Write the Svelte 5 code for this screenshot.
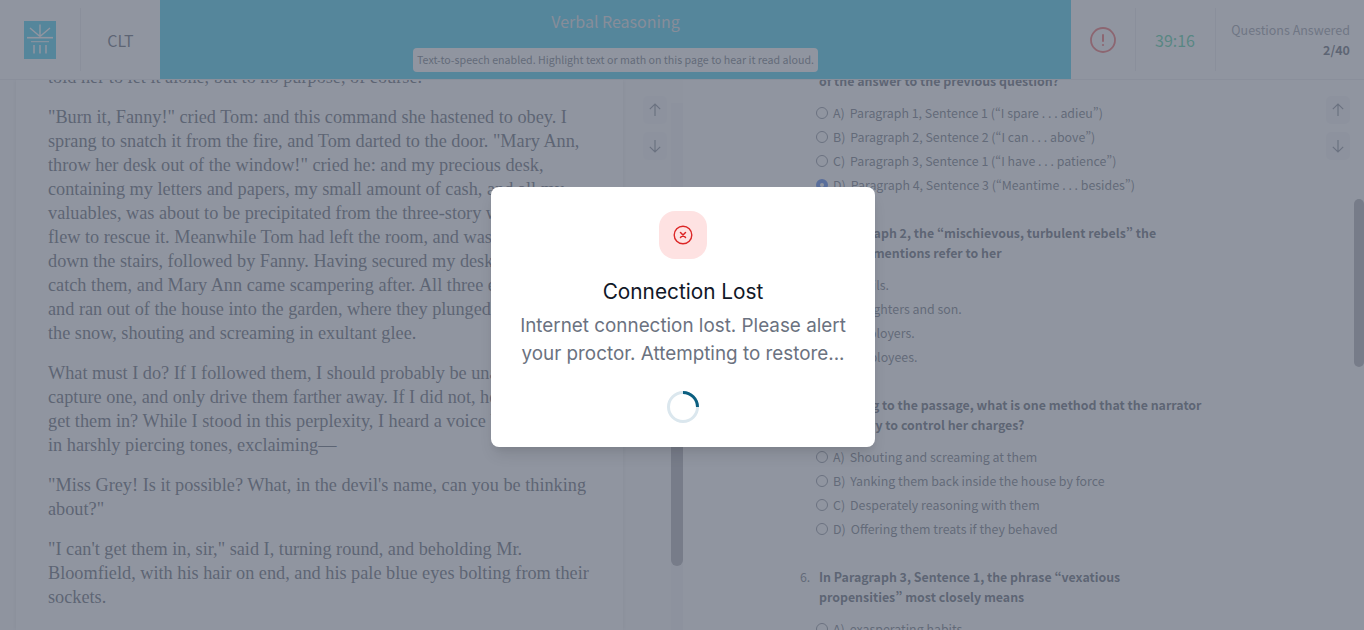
<script>
  const passage = [
    ["told her to let it alone, but to no purpose, of course."],
    [
      "\"Burn it, Fanny!\" cried Tom: and this command she hastened to obey. I",
      "sprang to snatch it from the fire, and Tom darted to the door. \"Mary Ann,",
      "throw her desk out of the window!\" cried he: and my precious desk,",
      "containing my letters and papers, my small amount of cash, and all my",
      "valuables, was about to be precipitated from the three-story window. I",
      "flew to rescue it. Meanwhile Tom had left the room, and was rushing",
      "down the stairs, followed by Fanny. Having secured my desk, I ran to",
      "catch them, and Mary Ann came scampering after. All three escaped me,",
      "and ran out of the house into the garden, where they plunged about in",
      "the snow, shouting and screaming in exultant glee."
    ],
    [
      "What must I do? If I followed them, I should probably be unable to",
      "capture one, and only drive them farther away. If I did not, how could I",
      "get them in? While I stood in this perplexity, I heard a voice behind me,",
      "in harshly piercing tones, exclaiming—"
    ],
    [
      "\"Miss Grey! Is it possible? What, in the devil's name, can you be thinking",
      "about?\""
    ],
    [
      "\"I can't get them in, sir,\" said I, turning round, and beholding Mr.",
      "Bloomfield, with his hair on end, and his pale blue eyes bolting from their",
      "sockets."
    ]
  ];

  const questions = [
    {
      lines: ["of the answer to the previous question?"],
      options: [
        ["A)", "Paragraph 1, Sentence 1 (“I spare . . . adieu”)"],
        ["B)", "Paragraph 2, Sentence 2 (“I can . . . above”)"],
        ["C)", "Paragraph 3, Sentence 1 (“I have . . . patience”)"],
        ["D)", "Paragraph 4, Sentence 3 (“Meantime . . . besides”)"]
      ],
      picked: 3
    },
    {
      num: "4.",
      lines: ["In Paragraph 2, the “mischievous, turbulent rebels” the", "narrator mentions refer to her"],
      options: [
        ["A)", "Pupils."],
        ["B)", "Daughters and son."],
        ["C)", "Employers."],
        ["D)", "Employees."]
      ]
    },
    {
      num: "5.",
      lines: ["According to the passage, what is one method that the narrator", "uses to try to control her charges?"],
      options: [
        ["A)", "Shouting and screaming at them"],
        ["B)", "Yanking them back inside the house by force"],
        ["C)", "Desperately reasoning with them"],
        ["D)", "Offering them treats if they behaved"]
      ]
    },
    {
      num: "6.",
      lines: ["In Paragraph 3, Sentence 1, the phrase “vexatious", "propensities” most closely means"],
      options: [["A)", "exasperating habits"]]
    }
  ];
</script>

{#snippet scrollButtons()}
  <div class="scroll-buttons">
    <div class="scroll-btn">
      <svg width="16" height="16" viewBox="0 0 16 16" fill="none" stroke="currentColor" stroke-width="1.2"><path d="M8 2v12M2.8 7.2 8 2l5.2 5.2" /></svg>
    </div>
    <div class="scroll-btn">
      <svg width="16" height="16" viewBox="0 0 16 16" fill="none" stroke="currentColor" stroke-width="1.2"><path d="M8 2v12M2.8 8.8 8 14l5.2-5.2" /></svg>
    </div>
  </div>
{/snippet}

<div class="page">
  <header>
    <div class="cell logo-cell">
      <svg class="logo" width="32" height="38" viewBox="0 0 32 38">
        <rect width="32" height="38" fill="#17c1ea" />
        <g stroke="#fff" fill="none">
          <path d="M16 3.5V15.5M6 7l10 8.5M26 7l-10 8.5" stroke-width="1.4" />
          <path d="M3 16.7h26" stroke-width="1.6" />
          <path d="M7 20.7h18" stroke-width="1" />
          <path d="M10 24v8.5M16 24v8.5M22 24v8.5" stroke-width="1.5" />
        </g>
      </svg>
    </div>
    <div class="cell clt-cell">CLT</div>
    <div class="title-bar">
      <div class="title">Verbal Reasoning</div>
      <div class="tts-note">Text-to-speech enabled. Highlight text or math on this page to hear it read aloud.</div>
    </div>
    <div class="cell alert-cell">
      <svg width="26" height="26" viewBox="0 0 26 26" fill="none">
        <circle cx="13" cy="13" r="12" stroke="#ef4444" stroke-width="1.8" />
        <path d="M13 8v6" stroke="#ef4444" stroke-width="2" stroke-linecap="round" />
        <circle cx="13" cy="18" r="1.1" fill="#ef4444" />
      </svg>
    </div>
    <div class="cell timer-cell">39:16</div>
    <div class="answered">
      <div class="answered-label">Questions Answered</div>
      <div class="answered-count">2/40</div>
    </div>
  </header>

  <main>
    <section class="passage">
      {#each passage as para}
        <p>
          {#each para as line}
            <span class="line">{line}</span>
          {/each}
        </p>
      {/each}
    </section>

    <div class="divider">
      {@render scrollButtons()}
      <div class="track"><div class="thumb"></div></div>
    </div>

    <section class="questions">
      {#each questions as q}
        <div class="question">
          <div class="prompt">
            <span class="num">{q.num ?? ""}</span>
            <div class="prompt-text">
              {#each q.lines as line}
                <span class="line">{line}</span>
              {/each}
            </div>
          </div>
          <div class="options">
            {#each q.options as opt, i}
              <div class="option">
                <span class="radio" class:picked={q.picked === i}></span>
                <span class="letter">{opt[0]}</span>
                <span>{opt[1]}</span>
              </div>
            {/each}
          </div>
        </div>
      {/each}
    </section>

    <div class="right-rail">
      {@render scrollButtons()}
    </div>
    <div class="page-scroll"><div class="page-thumb"></div></div>
  </main>

  <div class="overlay">
    <div class="modal">
      <div class="modal-icon">
        <svg width="20" height="20" viewBox="0 0 20 20" fill="none" stroke="#dc2626">
          <circle cx="10" cy="10" r="8.8" stroke-width="1.4" />
          <path d="M7.5 7.5l5 5M12.5 7.5l-5 5" stroke-width="1.5" stroke-linecap="round" />
        </svg>
      </div>
      <h2>Connection Lost</h2>
      <p class="modal-text">Internet connection lost. Please alert your proctor. Attempting to restore...</p>
      <svg class="spinner" width="32" height="32" viewBox="0 0 32 32" fill="none" stroke-width="3">
        <circle cx="16" cy="16" r="14.5" stroke="#dbe7ee" />
        <path d="M16 1.5A14.5 14.5 0 0 1 30.5 16" stroke="#0b5f80" />
      </svg>
    </div>
  </div>
</div>

<style>
  :global(body) {
    margin: 0;
    overflow: hidden;
  }

  .page {
    position: relative;
    width: 1364px;
    height: 630px;
    overflow: hidden;
    background: #fff;
    font-family: "Noto Sans CJK SC", "Open Sans", sans-serif;
    font-feature-settings: "pwid";
    display: flex;
    flex-direction: column;
  }

  header {
    height: 80px;
    flex: none;
    display: flex;
    background: #fff;
    border-bottom: 1px solid #e5e7eb;
    box-sizing: border-box;
    position: relative;
    z-index: 2;
  }

  .cell {
    display: flex;
    align-items: center;
    justify-content: center;
    position: relative;
  }

  .cell::after {
    content: "";
    position: absolute;
    right: -1px;
    top: 8px;
    bottom: 8px;
    width: 1px;
    background: #e5e7eb;
  }

  .logo-cell {
    width: 80px;
  }

  .clt-cell {
    width: 80px;
    box-sizing: border-box;
    padding-left: 1px;
    font-size: 16px;
    color: #374151;
  }

  .clt-cell::after {
    display: none;
  }

  .title-bar {
    width: 911px;
    height: 79px;
    background: #17c1ea;
    display: flex;
    flex-direction: column;
    align-items: center;
    padding-top: 9px;
    box-sizing: border-box;
  }

  .title {
    font-size: 16px;
    line-height: 24px;
    color: #d9dee3;
  }

  .tts-note {
    margin-top: 15px;
    background: #fff;
    border-radius: 4px;
    height: 24px;
    line-height: 24px;
    padding: 0 4px;
    font-size: 10.65px;
    color: #4b5563;
  }

  .alert-cell {
    width: 64px;
  }

  .timer-cell {
    width: 80px;
    font-size: 16px;
    color: #22c58b;
  }

  .answered {
    flex: 1;
    text-align: right;
    padding: 20px 14px 0 0;
    font-size: 12.5px;
  }

  .answered-label {
    line-height: 20px;
    color: #7b8390;
  }

  .answered-count {
    line-height: 20px;
    font-weight: 700;
    color: #374151;
  }

  main {
    flex: 1;
    display: flex;
    min-height: 0;
    background: #fafafb;
    position: relative;
  }

  .passage {
    width: 607px;
    margin-left: 16px;
    flex: none;
    box-sizing: border-box;
    padding: 0 0 0 32px;
    overflow: hidden;
    background: #fff;
    box-shadow: 0 0 4px rgba(0, 0, 0, 0.12);
    font-family: "Liberation Serif", serif;
    font-size: 18.25px;
    line-height: 24px;
    color: #374151;
  }

  .passage p {
    margin: 0 0 16px;
  }

  .passage p:first-child {
    margin-top: -15px;
  }

  .line {
    display: block;
    white-space: nowrap;
  }

  .divider {
    width: 60px;
    flex: none;
    display: flex;
    position: relative;
  }

  .scroll-buttons {
    display: flex;
    flex-direction: column;
    gap: 8px;
    padding-top: 16px;
  }

  .divider .scroll-buttons {
    margin-left: 20px;
  }

  .scroll-btn {
    width: 24px;
    height: 28px;
    border-radius: 5px;
    background: #f3f4f6;
    color: #6b7280;
    display: flex;
    align-items: center;
    justify-content: center;
  }

  .track {
    position: absolute;
    left: 48px;
    top: 23px;
    bottom: 0;
    width: 12px;
    background: #f3f4f6;
  }

  .thumb {
    position: absolute;
    left: 0;
    right: 0;
    top: 180px;
    height: 283px;
    border-radius: 0 0 6px 6px;
    background: #9a9ca3;
  }

  .questions {
    flex: 1;
    min-width: 0;
    overflow: hidden;
    padding-left: 136px;
    background: #fff;
    font-size: 12.38px;
    line-height: 20px;
    color: #4b5563;
  }

  .question {
    margin-bottom: 26px;
  }

  .question:first-child {
    margin-top: -9px;
  }

  .prompt {
    display: flex;
    margin-left: -19px;
    font-weight: 700;
    color: #374151;
  }

  .num {
    width: 19px;
    flex: none;
    font-weight: 400;
    color: #4b5563;
  }

  .options {
    margin-top: 10px;
    display: flex;
    flex-direction: column;
  }

  .option {
    height: 24px;
    display: flex;
    align-items: center;
    margin-left: -3px;
  }

  .radio {
    width: 10px;
    height: 10px;
    border-radius: 50%;
    border: 1px solid #6b7280;
    margin-right: 5px;
    flex: none;
  }

  .radio.picked {
    border: 4px solid #2563eb;
    width: 4px;
    height: 4px;
  }

  .letter {
    margin-right: 5px;
  }

  .right-rail {
    width: 38px;
    flex: none;
    background: #fff;
    box-sizing: border-box;
    padding-left: 10px;
  }

  .page-scroll {
    width: 10px;
    flex: none;
    position: relative;
    background: #fff;
  }

  .page-thumb {
    position: absolute;
    top: 119px;
    height: 168px;
    left: 0;
    right: 0;
    border-radius: 5px;
    background: #9a9ca3;
  }

  .overlay {
    position: absolute;
    inset: 0;
    z-index: 5;
    box-sizing: border-box;
    padding-left: 2px;
    background: rgba(107, 114, 128, 0.75);
    display: flex;
    justify-content: center;
  }

  .modal {
    margin-top: 187px;
    width: 384px;
    height: 260px;
    box-sizing: border-box;
    background: #fff;
    border-radius: 8px;
    box-shadow: 0 10px 15px -3px rgba(0, 0, 0, 0.1), 0 4px 6px -2px rgba(0, 0, 0, 0.05);
    padding: 24px 24px 0;
    display: flex;
    flex-direction: column;
    align-items: center;
    font-family: "Inter", sans-serif;
    font-feature-settings: normal;
  }

  .modal-icon {
    width: 48px;
    height: 48px;
    border-radius: 16px;
    background: #fee2e2;
    display: flex;
    align-items: center;
    justify-content: center;
  }

  h2 {
    margin: 19px 0 0;
    font-size: 20.8px;
    line-height: 28px;
    font-weight: 400;
    color: #111827;
  }

  .modal-text {
    margin: 6px -4px 0;
    font-size: 18.85px;
    line-height: 28px;
    text-align: center;
    color: #6b7280;
  }

  .spinner {
    margin-top: 23px;
  }
</style>
